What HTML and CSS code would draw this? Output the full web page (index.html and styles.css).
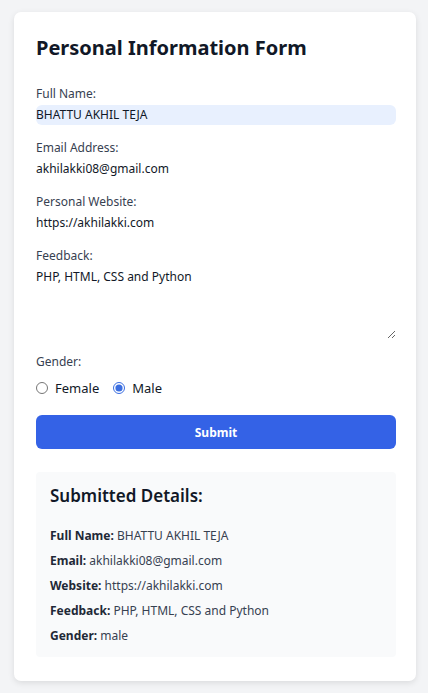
FILE: index.html
```html
<!DOCTYPE html>
<html lang="en">
<head>
<meta charset="utf-8">
<title>Personal Information Form</title>
<link rel="stylesheet" href="styles.css">
</head>
<body>
<main class="card">
  <h1 class="title">Personal Information Form</h1>
  <form class="form">
    <div class="field">
      <label class="label" for="name">Full Name:</label>
      <input class="input input-autofill" id="name" type="text" value="BHATTU AKHIL TEJA">
    </div>
    <div class="field">
      <label class="label" for="email">Email Address:</label>
      <input class="input" id="email" type="email" value="akhilakki08@gmail.com">
    </div>
    <div class="field">
      <label class="label" for="site">Personal Website:</label>
      <input class="input" id="site" type="url" value="https://akhilakki.com">
    </div>
    <div class="field">
      <label class="label" for="fb">Feedback:</label>
      <textarea class="textarea" id="fb" rows="4">PHP, HTML, CSS and Python</textarea>
    </div>
    <div class="field">
      <span class="label">Gender:</span>
      <div class="radios">
        <label class="radio"><input type="radio" name="g" value="female"> Female</label>
        <label class="radio"><input type="radio" name="g" value="male" checked> Male</label>
      </div>
    </div>
    <button class="submit" type="button">Submit</button>
  </form>
  <section class="details">
    <h2 class="details-title">Submitted Details:</h2>
    <p class="row"><strong>Full Name:</strong> BHATTU AKHIL TEJA</p>
    <p class="row"><strong>Email:</strong> akhilakki08@gmail.com</p>
    <p class="row"><strong>Website:</strong> https://akhilakki.com</p>
    <p class="row"><strong>Feedback:</strong> PHP, HTML, CSS and Python</p>
    <p class="row"><strong>Gender:</strong> male</p>
  </section>
</main>
</body>
</html>
```
FILE: styles.css
```css
* { box-sizing: border-box; }
html, body {
  margin: 0;
  background: #f3f4f6;
  font-family: "Noto Sans", "Open Sans", sans-serif;
  color: #1f2937;
}
body { padding: 12px 12px 13px 14px; }
.card {
  background: #fff;
  border-radius: 7px;
  box-shadow: 0 2px 6px rgba(0,0,0,0.10);
  padding: 22px 20px 24px 22px;
}
.title {
  margin: 0 0 23px;
  font-size: 20px;
  line-height: 28px;
  font-weight: 700;
  color: #111827;
}
.form { display: flex; flex-direction: column; }
.field { display: flex; flex-direction: column; margin-bottom: 14px; }
.label {
  font-size: 12px;
  line-height: 18px;
  color: #374151;
  margin-bottom: 2px;
}
.input, .textarea {
  font-family: inherit;
  font-size: 12px;
  color: #111827;
  border: none;
  outline: none;
  padding: 0;
  margin: 0;
  height: 20px;
  line-height: 20px;
  background: transparent;
  border-radius: 6px;
}
.input-autofill { background: #e8f0fe; }
.textarea {
  height: 72px;
  resize: vertical;
  line-height: 20px;
  padding-top: 0;
}
.radios { display: flex; gap: 14px; align-items: center; margin-top: 6px; }
.radio {
  display: flex;
  align-items: center;
  gap: 7px;
  font-size: 13px;
  color: #111827;
}
.radio input { margin: 0; width: 12px; height: 12px; accent-color: #3b6ee0; }
.submit {
  margin-top: 4px;
  height: 34px;
  border: none;
  border-radius: 6px;
  background: #3462e6;
  color: #fff;
  font-family: inherit;
  font-size: 12px;
  font-weight: 700;
}
.details {
  margin-top: 23px;
  background: #f9fafb;
  border-radius: 4px;
  padding: 12px 14px 9px;
}
.details-title {
  margin: 0 0 15px;
  font-size: 17px;
  line-height: 24px;
  font-weight: 600;
  color: #111827;
}
.row {
  margin: 0;
  font-size: 12px;
  line-height: 25px;
  color: #374151;
}
.row strong { color: #1f2937; font-weight: 700; }
```
